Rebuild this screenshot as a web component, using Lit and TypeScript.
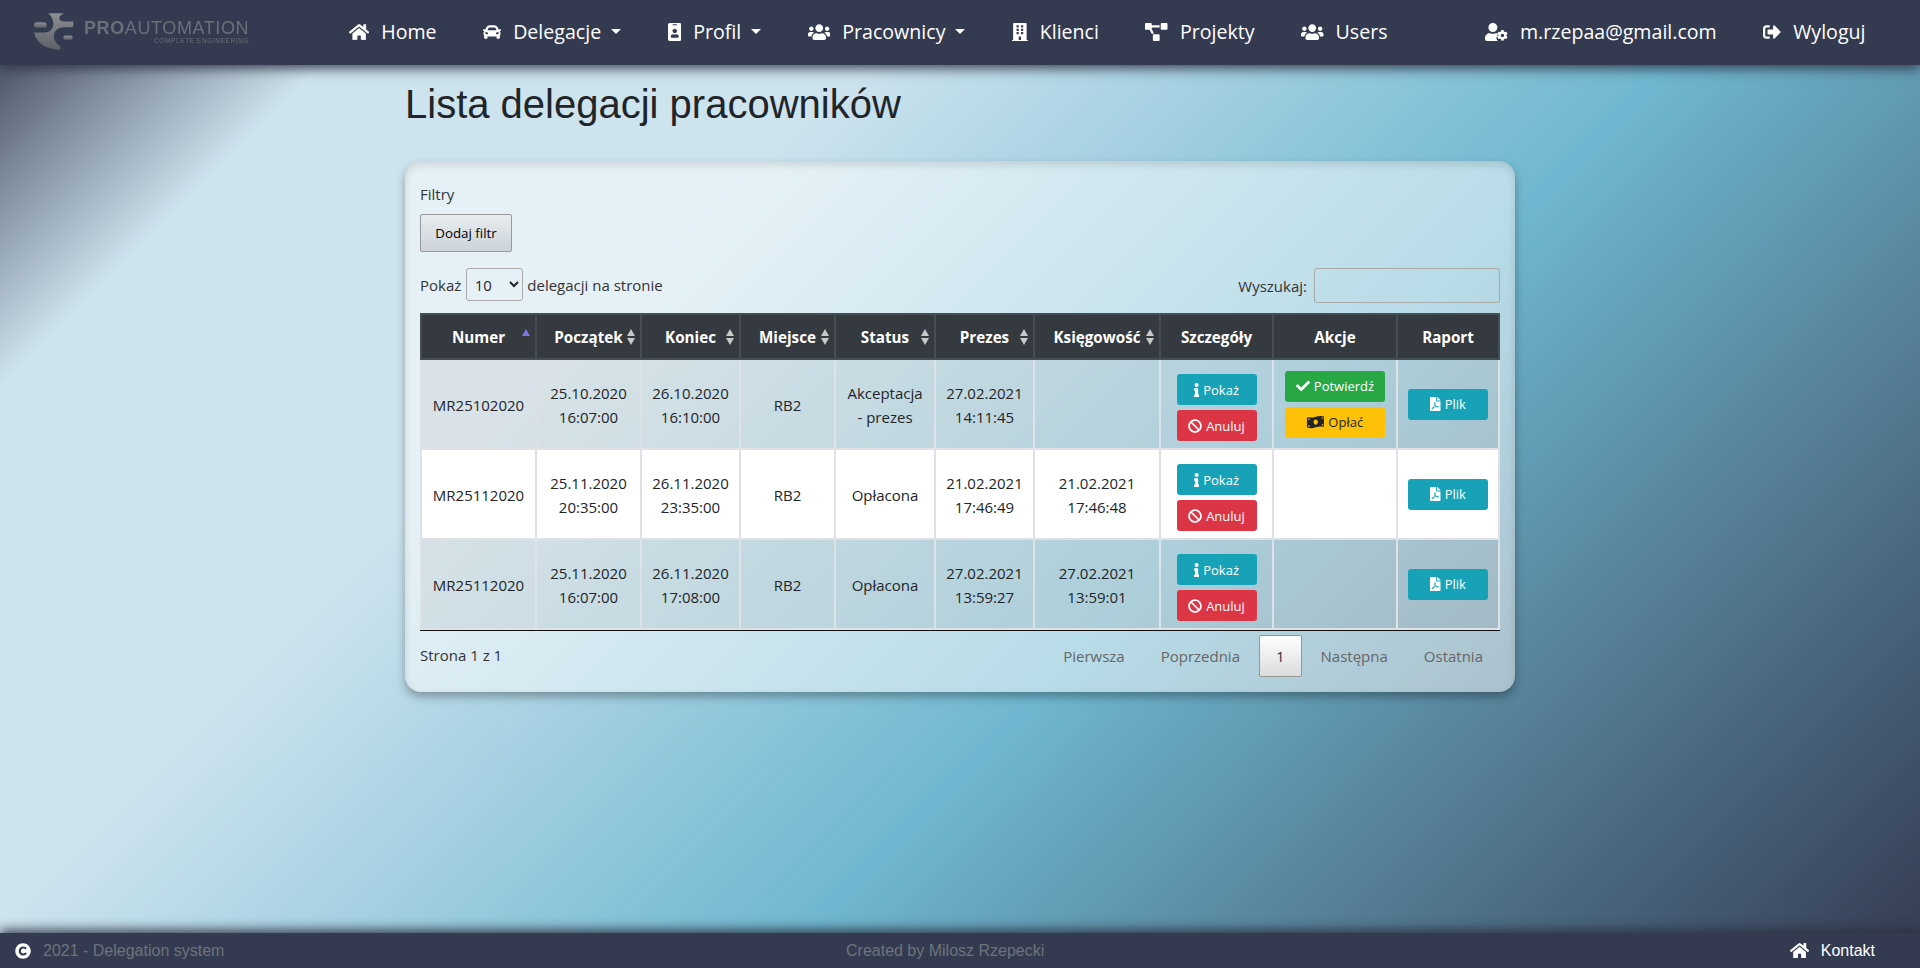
import { LitElement, html, css, svg, nothing } from "lit";
import { customElement } from "lit/decorators.js";

const ICONS: Record<string, [number, string]> = {
  home: [576, "M280.37 148.26L96 300.11V464a16 16 0 0 0 16 16l112.06-.29a16 16 0 0 0 15.92-16V368a16 16 0 0 1 16-16h64a16 16 0 0 1 16 16v95.64a16 16 0 0 0 16 16.05L464 480a16 16 0 0 0 16-16V300L295.67 148.26a12.19 12.19 0 0 0-15.3 0zM571.6 251.47L488 182.56V44.05a12 12 0 0 0-12-12h-56a12 12 0 0 0-12 12v72.61L318.47 43a48 48 0 0 0-61 0L4.34 251.47a12 12 0 0 0-1.6 16.9l25.5 31A12 12 0 0 0 45.15 301l235.22-193.74a12.19 12.19 0 0 1 15.3 0L530.9 301a12 12 0 0 0 16.9-1.6l25.5-31a12 12 0 0 0-1.7-16.93z"],
  car: [512, "M499.99 176h-59.87l-16.64-41.6C406.38 91.63 365.57 64 319.5 64h-127c-46.06 0-86.88 27.63-103.99 70.4L71.87 176H12.01C4.2 176-1.53 183.34.37 190.91l6 24C7.7 220.25 12.5 224 18.01 224h20.07C24.65 235.73 16 252.78 16 272v48c0 16.12 6.16 30.67 16 41.93V416c0 17.67 14.33 32 32 32h32c17.67 0 32-14.33 32-32v-32h256v32c0 17.67 14.33 32 32 32h32c17.67 0 32-14.33 32-32v-54.07c9.84-11.25 16-25.8 16-41.93v-48c0-19.22-8.65-36.27-22.07-48H494c5.51 0 10.31-3.75 11.64-9.09l6-24c1.89-7.57-3.84-14.91-11.65-14.91zm-352.06-17.83c7.29-18.22 24.94-30.17 44.57-30.17h127c19.63 0 37.28 11.95 44.57 30.17L384 208H128l19.93-49.83zM96 319.8c-19.2 0-32-12.76-32-31.9S76.8 256 96 256s48 28.71 48 47.85-28.8 15.95-48 15.95zm320 0c-19.2 0-48 3.19-48-15.95S396.8 256 416 256s32 12.76 32 31.9-12.8 31.9-32 31.9z"],
  badge: [384, "M336 0H48C21.5 0 0 21.5 0 48v416c0 26.5 21.5 48 48 48h288c26.5 0 48-21.5 48-48V48c0-26.5-21.5-48-48-48zM144 32h96c8.8 0 16 7.2 16 16s-7.2 16-16 16h-96c-8.8 0-16-7.2-16-16s7.2-16 16-16zm48 128c35.3 0 64 28.7 64 64s-28.7 64-64 64-64-28.7-64-64 28.7-64 64-64zm112 236.8c0 10.6-10 19.2-22.4 19.2H102.4C90 416 80 407.4 80 396.8v-19.2c0-31.8 30.1-57.6 67.2-57.6h5c12.3 5.1 25.7 8 39.8 8s27.6-2.9 39.8-8h5c37.1 0 67.2 25.8 67.2 57.6v19.2z"],
  users: [640, "M96 224c35.3 0 64-28.7 64-64s-28.7-64-64-64-64 28.7-64 64 28.7 64 64 64zm448 0c35.3 0 64-28.7 64-64s-28.7-64-64-64-64 28.7-64 64 28.7 64 64 64zm32 32h-64c-17.6 0-33.5 7.1-45.1 18.6 40.3 22.1 68.9 62 75.1 109.4h66c17.7 0 32-14.3 32-32v-32c0-35.3-28.7-64-64-64zm-256 0c61.9 0 112-50.1 112-112S381.9 32 320 32 208 82.1 208 144s50.1 112 112 112zm76.8 32h-8.3c-20.8 10-43.9 16-68.5 16s-47.6-6-68.5-16h-8.3C179.6 288 128 339.6 128 403.2V432c0 26.5 21.5 48 48 48h288c26.5 0 48-21.5 48-48v-28.8c0-63.6-51.6-115.2-115.2-115.2zm-223.7-13.4C161.5 263.1 145.6 256 128 256H64c-35.3 0-64 28.7-64 64v32c0 17.7 14.3 32 32 32h65.9c6.3-47.4 34.9-87.3 75.2-109.4z"],
  building: [448, "M436 480h-20V24c0-13.255-10.745-24-24-24H56C42.745 0 32 10.745 32 24v456H12c-6.627 0-12 5.373-12 12v20h448v-20c0-6.627-5.373-12-12-12zM128 76c0-6.627 5.373-12 12-12h40c6.627 0 12 5.373 12 12v40c0 6.627-5.373 12-12 12h-40c-6.627 0-12-5.373-12-12V76zm0 96c0-6.627 5.373-12 12-12h40c6.627 0 12 5.373 12 12v40c0 6.627-5.373 12-12 12h-40c-6.627 0-12-5.373-12-12v-40zm52 148h-40c-6.627 0-12-5.373-12-12v-40c0-6.627 5.373-12 12-12h40c6.627 0 12 5.373 12 12v40c0 6.627-5.373 12-12 12zm76 160h-64v-84c0-6.627 5.373-12 12-12h40c6.627 0 12 5.373 12 12v84zm64-172c0 6.627-5.373 12-12 12h-40c-6.627 0-12-5.373-12-12v-40c0-6.627 5.373-12 12-12h40c6.627 0 12 5.373 12 12v40zm0-96c0 6.627-5.373 12-12 12h-40c-6.627 0-12-5.373-12-12v-40c0-6.627 5.373-12 12-12h40c6.627 0 12 5.373 12 12v40zm0-96c0 6.627-5.373 12-12 12h-40c-6.627 0-12-5.373-12-12V76c0-6.627 5.373-12 12-12h40c6.627 0 12 5.373 12 12v40z"],
  diagram: [640, "M384 320H256c-17.67 0-32 14.33-32 32v128c0 17.67 14.33 32 32 32h128c17.67 0 32-14.33 32-32V352c0-17.67-14.33-32-32-32zM192 32c0-17.67-14.33-32-32-32H32C14.33 0 0 14.33 0 32v128c0 17.67 14.33 32 32 32h95.72l73.16 128.04C211.98 300.98 232.4 288 256 288h.28L192 175.51V128h224V64H192V32zM608 0H480c-17.67 0-32 14.33-32 32v128c0 17.67 14.33 32 32 32h128c17.67 0 32-14.33 32-32V32c0-17.67-14.33-32-32-32z"],
  usercog: [640, "M610.5 373.3c2.6-14.1 2.6-28.5 0-42.6l25.8-14.9c3-1.7 4.3-5.2 3.3-8.5-6.7-21.6-18.2-41.2-33.2-57.4-2.3-2.5-6-3.1-9-1.4l-25.8 14.9c-10.9-9.3-23.4-16.5-36.9-21.3v-29.8c0-3.4-2.4-6.4-5.7-7.1-22.3-5-45-4.8-66.2 0-3.3.7-5.7 3.7-5.7 7.1v29.8c-13.5 4.8-26 12-36.9 21.3l-25.8-14.9c-2.9-1.7-6.7-1.1-9 1.4-15 16.2-26.5 35.8-33.2 57.4-1 3.3.4 6.8 3.3 8.5l25.8 14.9c-2.6 14.1-2.6 28.5 0 42.6l-25.8 14.9c-3 1.7-4.3 5.2-3.3 8.5 6.7 21.6 18.2 41.1 33.2 57.4 2.3 2.5 6 3.1 9 1.4l25.8-14.9c10.9 9.3 23.4 16.5 36.9 21.3v29.8c0 3.4 2.4 6.4 5.7 7.1 22.3 5 45 4.8 66.2 0 3.3-.7 5.7-3.7 5.7-7.1v-29.8c13.5-4.8 26-12 36.9-21.3l25.8 14.9c2.9 1.7 6.7 1.1 9-1.4 15-16.2 26.5-35.8 33.2-57.4 1-3.3-.4-6.8-3.3-8.5l-25.8-14.9zM496 400.5c-26.8 0-48.5-21.8-48.5-48.5s21.8-48.5 48.5-48.5 48.5 21.8 48.5 48.5-21.7 48.5-48.5 48.5zM224 256c70.7 0 128-57.3 128-128S294.7 0 224 0 96 57.3 96 128s57.3 128 128 128zM48 512C21.5 512 0 490.5 0 464v-41.6C0 348.2 60.2 288 134.4 288h16.7c22.2 10.2 46.9 16 72.9 16s50.7-5.8 72.9-16h16.7c17 0 33 3 48 9-6 18-9 36-9 55 0 12 1 24 3 36l-14 8c-16 10-23 29-17 47 8 25 21 48 38 67l2 2H48z"],
  signout: [512, "M497 273L329 441c-15 15-41 4.5-41-17v-96H152c-13.3 0-24-10.7-24-24v-96c0-13.3 10.7-24 24-24h136V88c0-21.4 25.9-32 41-17l168 168c9.3 9.4 9.3 24.6 0 34zM192 436v-40c0-6.6-5.4-12-12-12H96c-17.7 0-32-14.3-32-32V160c0-17.7 14.3-32 32-32h84c6.6 0 12-5.4 12-12V76c0-6.6-5.4-12-12-12H96c-53 0-96 43-96 96v192c0 53 43 96 96 96h84c6.6 0 12-5.4 12-12z"],
  info: [192, "M20 424.229h20V279.771H20c-11.046 0-20-8.954-20-20V212c0-11.046 8.954-20 20-20h112c11.046 0 20 8.954 20 20v212.229h20c11.046 0 20 8.954 20 20V492c0 11.046-8.954 20-20 20H20c-11.046 0-20-8.954-20-20v-47.771c0-11.046 8.954-20 20-20zM96 0C56.235 0 24 32.235 24 72s32.235 72 72 72 72-32.235 72-72S135.764 0 96 0z"],
  ban: [512, "M256 8C119.034 8 8 119.033 8 256s111.034 248 248 248 248-111.034 248-248S392.967 8 256 8zm130.108 117.892c65.448 65.448 70 165.481 20.677 235.637L150.47 105.216c70.204-49.356 170.226-44.735 235.638 20.676zM125.892 386.108c-65.448-65.448-70-165.481-20.677-235.637L361.53 406.784c-70.203 49.356-170.226 44.736-235.638-20.676z"],
  check: [512, "M173.898 439.404l-166.4-166.4c-9.997-9.997-9.997-26.206 0-36.204l36.203-36.204c9.997-9.998 26.207-9.998 36.204 0L192 312.69 432.095 72.596c9.997-9.997 26.207-9.997 36.204 0l36.203 36.204c9.997 9.997 9.997 26.206 0 36.204l-294.4 294.401c-9.998 9.997-26.207 9.997-36.204-.001z"],
  money: [640, "M621.16 54.46C582.37 38.19 543.55 32 504.75 32c-123.17-.01-246.33 62.34-369.5 62.34-30.89 0-61.76-3.92-92.65-13.72-3.47-1.1-6.95-1.62-10.35-1.62C15.04 79 0 92.32 0 110.81v317.26c0 12.63 7.23 24.6 18.84 29.46C57.63 473.81 96.45 480 135.25 480c123.17 0 246.34-62.35 369.51-62.35 30.89 0 61.76 3.92 92.65 13.72 3.47 1.1 6.95 1.62 10.35 1.62 17.21 0 32.25-13.32 32.25-31.81V83.93c-.01-12.64-7.24-24.6-18.85-29.47zM48 132.22c20.12 5.04 41.12 7.57 62.72 8.93C104.84 170.54 79 192.69 48 192.69v-60.47zm0 285v-47.78c34.37 0 62.18 27.27 63.71 61.4-22.53-1.81-43.59-6.31-63.71-13.62zM320 352c-44.19 0-80-42.99-80-96 0-53.02 35.82-96 80-96s80 42.98 80 96c0 53.03-35.83 96-80 96zm272 27.78c-17.52-4.39-35.71-6.85-54.32-8.44 5.87-26.08 27.5-45.88 54.32-49.28v57.72zm0-236.11c-30.89-3.91-54.86-29.7-55.81-61.55 19.54 2.17 38.09 6.23 55.81 12.66v48.89z"],
  pdf: [384, "M181.9 256.1c-5-16-4.9-46.9-2-46.9 8.4 0 7.6 36.9 2 46.9zm-1.7 47.2c-7.7 20.2-17.3 43.3-28.4 62.7 18.3-7 39-17.2 62.9-21.9-12.7-9.6-24.9-23.4-34.5-40.8zM86.1 428.1c0 .8 13.2-5.4 34.9-40.2-6.7 6.3-29.1 24.5-34.9 40.2zM248 160h136v328c0 13.3-10.7 24-24 24H24c-13.3 0-24-10.7-24-24V24C0 10.7 10.7 0 24 0h200v136c0 13.2 10.8 24 24 24zm-8 171.8c-20-12.2-33.3-29-42.7-53.8 4.5-18.5 11.6-46.6 6.2-64.2-4.7-29.4-42.4-26.5-47.8-6.8-5 18.3-.4 44.1 8.1 77-11.6 27.6-28.7 64.6-40.8 85.8-.1 0-.1.1-.2.1-27.1 13.9-73.6 44.5-54.5 68 5.6 6.9 16 10 21.5 10 17.9 0 35.7-18 61.1-61.8 25.8-8.5 54.1-19.1 79-23.2 21.7 11.8 47.1 19.5 64 19.5 29.2 0 31.2-32 19.7-43.4-13.9-13.6-54.3-9.7-73.6-7.2zM377 105L279 7c-4.5-4.5-10.6-7-17-7h-6v128h128v-6.1c0-6.3-2.5-12.4-7-16.9zm-74.1 255.3c4.1-2.7-2.5-11.9-42.8-9 37.1 15.8 42.8 9 42.8 9z"],
  copyright: [512, "M256 8C119.033 8 8 119.033 8 256s111.033 248 248 248 248-111.033 248-248S392.967 8 256 8zm117.134 346.753c-1.592 1.867-39.776 45.731-109.851 45.731-84.692 0-144.484-63.26-144.484-145.567 0-81.303 62.004-143.401 143.762-143.401 66.957 0 101.965 37.315 103.422 38.904a12 12 0 0 1 1.238 14.623l-22.383 34.655c-4.049 6.267-12.774 7.351-18.234 2.295-.233-.214-26.529-23.88-61.88-23.88-46.116 0-73.916 33.575-73.916 76.082 0 39.602 25.514 79.692 74.277 79.692 38.697 0 65.28-28.338 65.544-28.625 5.132-5.565 14.059-5.033 18.508 1.053l24.547 33.572a12.001 12.001 0 0 1-.55 14.866z"],
};

const icon = (name: string) => {
  const [w, d] = ICONS[name];
  return html`<svg class="icon" viewBox="0 0 ${w} 512" fill="currentColor">${svg`<path d=${d}></path>`}</svg>`;
};

const NAV_LEFT = [
  { icon: "home", label: "Home" },
  { icon: "car", label: "Delegacje", caret: true },
  { icon: "badge", label: "Profil", caret: true },
  { icon: "users", label: "Pracownicy", caret: true },
  { icon: "building", label: "Klienci" },
  { icon: "diagram", label: "Projekty" },
  { icon: "users", label: "Users" },
];

const COLUMNS = [
  { label: "Numer", sort: "asc", w: 115 },
  { label: "Początek", sort: "both", w: 105 },
  { label: "Koniec", sort: "both", w: 99 },
  { label: "Miejsce", sort: "both", w: 95 },
  { label: "Status", sort: "both", w: 100 },
  { label: "Prezes", sort: "both", w: 99 },
  { label: "Księgowość", sort: "both", w: 126 },
  { label: "Szczegóły", w: 113 },
  { label: "Akcje", w: 124 },
  { label: "Raport", w: 102 },
];

const ROWS = [
  { no: "MR25102020", start: "25.10.2020 16:07:00", end: "26.10.2020 16:10:00", place: "RB2", status: "Akceptacja - prezes", boss: "27.02.2021 14:11:45", acc: "", actions: true },
  { no: "MR25112020", start: "25.11.2020 20:35:00", end: "26.11.2020 23:35:00", place: "RB2", status: "Opłacona", boss: "21.02.2021 17:46:49", acc: "21.02.2021 17:46:48", actions: false },
  { no: "MR25112020", start: "25.11.2020 16:07:00", end: "26.11.2020 17:08:00", place: "RB2", status: "Opłacona", boss: "27.02.2021 13:59:27", acc: "27.02.2021 13:59:01", actions: false },
];

const PAGES = ["Pierwsza", "Poprzednia", "1", "Następna", "Ostatnia"];

@customElement("app-root")
export class AppRoot extends LitElement {
  static styles = css`
    :host {
      display: block;
      font-family: "Open Sans", "Noto Sans", sans-serif;
      font-size: 15px;
      line-height: 24px;
      color: #212529;
    }
    * {
      box-sizing: border-box;
    }
    .page {
      display: flex;
      flex-direction: column;
      height: 968px;
      overflow: hidden;
      background: linear-gradient(135deg, #343a50 0%, #cde3ee 13.4%, #cde3ee 32%, #6fb7d0 60%, #343a50 100%);
    }
    .icon {
      height: 1em;
      width: auto;
      flex: none;
      display: inline-block;
    }

    .navbar {
      position: relative;
      z-index: 2;
      flex: none;
      height: 65px;
      padding-bottom: 2px;
      display: flex;
      align-items: center;
      background: #343a50;
      box-shadow: 0 3px 12px rgba(45, 50, 65, 0.95);
      color: #fff;
    }
    .brand {
      flex: none;
      width: 349px;
      padding-left: 34px;
      display: flex;
      align-items: center;
      gap: 10px;
      color: #6b6f78;
      font-family: "Liberation Sans", sans-serif;
      filter: blur(0.4px);
    }
    .brand svg {
      width: 40px;
      height: 37px;
      flex: none;
    }
    .brand-name {
      font-size: 18px;
      line-height: 18px;
      letter-spacing: 0.6px;
      white-space: nowrap;
    }
    .brand-sub {
      font-size: 6.5px;
      line-height: 7px;
      letter-spacing: 0.6px;
      text-align: right;
      white-space: nowrap;
    }
    .nav-item {
      display: flex;
      align-items: center;
      gap: 12px;
      margin-right: 46.5px;
      font-size: 19.6px;
      white-space: nowrap;
    }
    .nav-item .icon {
      font-size: 18px;
    }
    .caret {
      width: 0;
      height: 0;
      margin-left: -2px;
      margin-top: -1px;
      border-top: 5.4px solid #fff;
      border-left: 5.4px solid transparent;
      border-right: 5.4px solid transparent;
    }
    .nav-right {
      margin-left: auto;
      display: flex;
      padding-right: 8px;
    }

    main {
      flex: 1;
      padding: 15px 405px 0;
    }
    h1 {
      margin: 0 0 33px;
      font-family: "Liberation Sans", sans-serif;
      font-size: 40px;
      line-height: 48px;
      font-weight: 400;
    }
    .card {
      height: 531px;
      padding: 21px 15px 0;
      border-radius: 16px;
      background: rgba(255, 255, 255, 0.5);
      box-shadow: 0 5px 10px rgba(0, 0, 0, 0.3), inset 0 4px 8px rgba(0, 0, 0, 0.12);
    }
    .filters-label {
      color: #333;
    }
    .add-filter {
      display: block;
      margin-top: 8px;
      width: 92px;
      height: 38px;
      padding: 0;
      border: 1px solid #999;
      border-radius: 2px;
      background: linear-gradient(to bottom, #e8edf0, #ccd3d9);
      font: inherit;
      font-size: 13.3px;
      color: #000;
    }
    .controls {
      display: flex;
      justify-content: space-between;
      align-items: flex-start;
      margin-top: 16px;
      height: 45px;
      color: #333;
    }
    .length,
    .search {
      display: flex;
      align-items: center;
      height: 35px;
    }
    .length {
      gap: 4.5px;
      height: 33px;
    }
    .search {
      gap: 7px;
    }
    select {
      width: 57px;
      height: 33px;
      padding: 0 6px 0 4px;
      border: 1px solid #aaa;
      border-radius: 3px;
      background: transparent;
      font: inherit;
      color: #212529;
    }
    input {
      width: 186px;
      height: 35px;
      border: 1px solid #aaa;
      border-radius: 3px;
      background: transparent;
    }

    table {
      width: 1078px;
      table-layout: fixed;
      border-collapse: collapse;
    }
    .table-wrap {
      border-bottom: 1px solid #111;
    }
    th,
    td {
      padding: 0 8px;
      text-align: center;
    }
    th {
      position: relative;
      height: 45px;
      border: 2px solid #454d55;
      background: #343a40;
      color: #fff;
      font-weight: 700;
      font-size: 15.2px;
      white-space: nowrap;
    }
    td {
      height: 90px;
      padding-top: 2px;
      border: 2px solid #dee2e6;
    }
    td.actions {
      padding-top: 0;
    }
    tbody tr:nth-child(odd) td {
      background: rgba(0, 0, 0, 0.06);
    }
    tbody tr:nth-child(even) td {
      background: #fff;
    }
    .sort {
      position: absolute;
      right: 5px;
      width: 0;
      height: 0;
      border-left: 4px solid transparent;
      border-right: 4px solid transparent;
    }
    .sort.up {
      top: 14px;
      border-bottom: 7px solid #c8c8c8;
    }
    .sort.down {
      top: 23px;
      border-top: 7px solid #c8c8c8;
    }
    .sort.active {
      border-bottom-color: #7a78e0;
    }

    .btns {
      display: flex;
      flex-direction: column;
      align-items: center;
      gap: 5px;
    }
    .btns.low {
      padding-top: 7px;
    }
    .btn {
      display: flex;
      align-items: center;
      justify-content: center;
      gap: 4px;
      width: 80px;
      height: 31px;
      border-radius: 3px;
      font-size: 13px;
      line-height: 20px;
      color: #fff;
    }
    .btn .icon {
      font-size: 14px;
    }
    .btn.wide {
      width: 100px;
    }
    .btn.info {
      background: #17a2b8;
    }
    .btn.danger {
      background: #dc3545;
    }
    .btn.success {
      background: #28a745;
    }
    .btn.warning {
      background: #ffc107;
      color: #212529;
    }

    .bottom {
      display: flex;
      justify-content: space-between;
      align-items: center;
      padding-top: 4px;
      color: #333;
    }
    .page-info {
      padding-bottom: 2px;
    }
    .pages {
      display: flex;
      gap: 2px;
    }
    .page-btn {
      height: 42px;
      padding: 0 16px;
      display: flex;
      align-items: center;
      border: 1px solid transparent;
      border-radius: 2px;
      color: #666;
    }
    .page-btn.current {
      border-color: #979797;
      background: linear-gradient(to bottom, #fff, #dcdcdc);
      color: #333;
    }

    footer {
      position: relative;
      z-index: 2;
      flex: none;
      height: 35px;
      display: grid;
      grid-template-columns: 846px 1fr auto;
      align-items: center;
      padding-right: 45px;
      background: #343a50;
      box-shadow: 0 -3px 12px rgba(45, 50, 65, 0.95);
      font-family: "Liberation Sans", sans-serif;
      font-size: 16px;
      color: #6c757d;
    }
    .foot-left {
      display: flex;
      align-items: center;
      gap: 12px;
      padding-left: 15px;
    }
    .foot-left .icon {
      color: #fff;
    }
    .contact {
      display: flex;
      align-items: center;
      gap: 12px;
      color: #fff;
    }
    .contact .icon {
      font-size: 17px;
    }
  `;

  private logo() {
    return html`<svg viewBox="0 0 120 110">
      <defs>
        <linearGradient id="lg" x1="0" y1="0" x2="0" y2="1">
          <stop offset="0" stop-color="#8c8e90"></stop>
          <stop offset="1" stop-color="#5d6068"></stop>
        </linearGradient>
      </defs>
      <g fill="url(#lg)">
        <path d="M43 0H90C84 4 76 8 76 16C76 22 84 25 92 25H118C119 30 118 36 116 42H90C74 42 62 52 60 64C58 78 66 92 78 98C80 104 80 106 78 110C40 110 6 90 0 58H32C48 58 58 46 58 32C58 20 52 8 43 0Z"></path>
        <rect x="0" y="27" width="38" height="17" rx="8"></rect>
        <rect x="88" y="67" width="28" height="13" rx="6"></rect>
      </g>
    </svg>`;
  }

  private navItem(item: { icon: string; label: string; caret?: boolean }) {
    return html`<div class="nav-item">
      ${icon(item.icon)}<span>${item.label}</span>
      ${item.caret ? html`<span class="caret"></span>` : nothing}
    </div>`;
  }

  private renderRow(row: (typeof ROWS)[number]) {
    return html`<tr>
      <td>${row.no}</td>
      <td>${row.start}</td>
      <td>${row.end}</td>
      <td>${row.place}</td>
      <td>${row.status}</td>
      <td>${row.boss}</td>
      <td>${row.acc}</td>
      <td class="actions">
        <div class="btns low">
          <div class="btn info">${icon("info")}Pokaż</div>
          <div class="btn danger">${icon("ban")}Anuluj</div>
        </div>
      </td>
      <td class="actions">
        ${row.actions
          ? html`<div class="btns">
              <div class="btn wide success">${icon("check")}Potwierdź</div>
              <div class="btn wide warning">${icon("money")}Opłać</div>
            </div>`
          : nothing}
      </td>
      <td class="actions">
        <div class="btns"><div class="btn info">${icon("pdf")}Plik</div></div>
      </td>
    </tr>`;
  }

  render() {
    return html`<div class="page">
      <nav class="navbar">
        <div class="brand">
          ${this.logo()}
          <div>
            <div class="brand-name"><b>PRO</b>AUTOMATION</div>
            <div class="brand-sub">COMPLETE ENGINEERING</div>
          </div>
        </div>
        ${NAV_LEFT.map((item) => this.navItem(item))}
        <div class="nav-right">
          ${this.navItem({ icon: "usercog", label: "m.rzepaa@gmail.com" })}
          ${this.navItem({ icon: "signout", label: "Wyloguj" })}
        </div>
      </nav>

      <main>
        <h1>Lista delegacji pracowników</h1>
        <section class="card">
          <div class="filters-label">Filtry</div>
          <button class="add-filter">Dodaj filtr</button>
          <div class="controls">
            <label class="length">
              Pokaż
              <select><option>10</option><option>25</option><option>50</option></select>
              delegacji na stronie
            </label>
            <label class="search">Wyszukaj: <input type="text" /></label>
          </div>
          <div class="table-wrap">
            <table>
              <colgroup>
                ${COLUMNS.map((c) => html`<col style="width:${c.w}px" />`)}
              </colgroup>
              <thead>
                <tr>
                  ${COLUMNS.map(
                    (c) => html`<th>
                      ${c.label}
                      ${c.sort === "asc" ? html`<span class="sort up active"></span>` : nothing}
                      ${c.sort === "both"
                        ? html`<span class="sort up"></span><span class="sort down"></span>`
                        : nothing}
                    </th>`
                  )}
                </tr>
              </thead>
              <tbody>
                ${ROWS.map((r) => this.renderRow(r))}
              </tbody>
            </table>
          </div>
          <div class="bottom">
            <div class="page-info">Strona 1 z 1</div>
            <div class="pages">
              ${PAGES.map(
                (p) => html`<div class="page-btn ${p === "1" ? "current" : ""}">${p}</div>`
              )}
            </div>
          </div>
        </section>
      </main>

      <footer>
        <div class="foot-left">${icon("copyright")}<span>2021 - Delegation system</span></div>
        <div>Created by Milosz Rzepecki</div>
        <div class="contact">${icon("home")}<span>Kontakt</span></div>
      </footer>
    </div>`;
  }
}
